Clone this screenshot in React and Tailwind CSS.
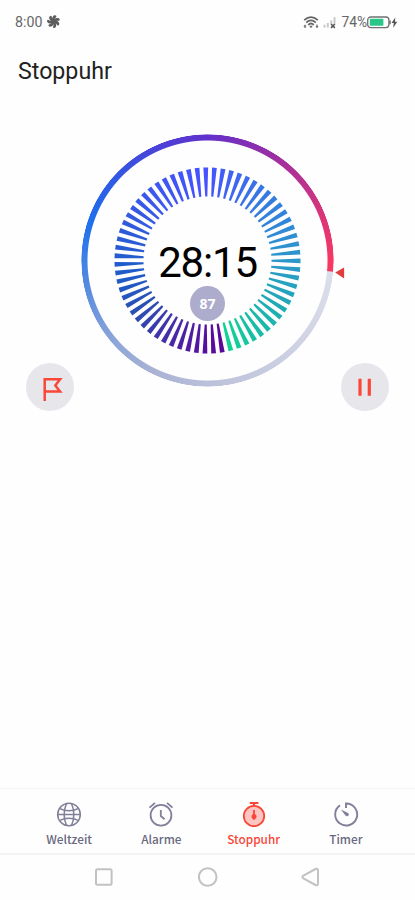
const CENTER = 130.5;
const TICK_COUNT = 67;

const tickStops = [
  [-1.5, '#4652ff'],
  [20, '#3f66ee'],
  [45, '#347ce0'],
  [90, '#2c97cb'],
  [120, '#21a9b6'],
  [145, '#18bda6'],
  [167.5, '#10d494'],
  [168.5, '#570896'],
  [182, '#5510a0'],
  [210, '#4430a8'],
  [235, '#2a50b4'],
  [260, '#1e5cc8'],
  [290, '#2e5bd8'],
  [320, '#3c58ee'],
  [358.9, '#4652ff'],
];

function tickColor(angle) {
  const i = Math.max(1, tickStops.findIndex(([a]) => a >= angle));
  const [a0, c0] = tickStops[i - 1];
  const [a1, c1] = tickStops[i];
  const t = (angle - a0) / (a1 - a0);
  const mix = [1, 3, 5].map((p) => {
    const from = parseInt(c0.slice(p, p + 2), 16);
    const to = parseInt(c1.slice(p, p + 2), 16);
    return Math.round(from + (to - from) * t);
  });
  return `rgb(${mix.join(',')})`;
}

function Dial() {
  const ticks = Array.from({ length: TICK_COUNT }, (_, i) => {
    const angle = -1.1 + (i * 360) / TICK_COUNT;
    return { angle, color: tickColor(angle) };
  });

  return (
    <div className="relative ml-[77px] h-[261px] w-[261px]">
      <div className="absolute inset-[4px] rounded-full bg-[conic-gradient(from_0deg,#6230cc_0deg,#a52f9c_38deg,#d8357a_68deg,#f93862_92deg,#f93862_94.9deg,#dcdfea_95.3deg,#d2d5e5_125deg,#bec3db_175deg,#a9b2d4_207deg,#8ba5d9_230deg,#5289e0_260deg,#1d70ee_288deg,#3a50df_320deg,#6230cc_360deg)] [mask:radial-gradient(circle,transparent_119.5px,black_120.5px,black_125.7px,transparent_126.5px)]" />
      <svg className="absolute inset-0" width="261" height="261" viewBox="0 0 261 261">
        {ticks.map(({ angle, color }) => (
          <path
            key={angle}
            d="M128.1 37.5h4.8l-1.35 29h-2.1z"
            fill={color}
            transform={`rotate(${angle} ${CENTER} ${CENTER})`}
          />
        ))}
      </svg>
      <div className="absolute inset-x-0 top-[108px] text-center font-[Roboto] text-[42px] leading-[50px] tracking-[-1.2px] text-black">
        28:15
      </div>
      <div className="absolute left-[113px] top-[156px] flex h-[35px] w-[35px] items-center justify-center rounded-full bg-[#adaccd] font-['Noto_Sans'] text-[14px] font-bold text-white">
        87
      </div>
      <svg className="absolute left-[258px] top-[137px]" width="10" height="12" viewBox="0 0 10 12">
        <path d="M.2 5.6 9.1.6v10.8z" fill="#e23d3e" />
      </svg>
    </div>
  );
}

function StatusBar() {
  return (
    <div className="flex h-[43px] items-center justify-between pl-[15px] pr-[17px] pt-[1px] text-[14.5px] text-[#666]">
      <div className="flex items-center gap-[5px]">
        <span className="pt-[1px] font-[Roboto] text-[14.2px]">8:00</span>
        <svg width="13" height="13" viewBox="0 0 13 13">
          {[0, 51, 103, 154, 206, 257, 309].map((a) => (
            <path key={a} d="M6.5 7C4.3 5 4.8 1.6 7.4.3 9.8.1 10 1.6 8.5 2.8 7.3 3.8 7.9 5.2 6.5 7z" fill="#5c5c5c" transform={`rotate(${a} 6.5 6.5)`} />
          ))}
        </svg>
      </div>
      <div className="flex items-center">
        <svg width="36" height="14" viewBox="0 0 36 14" fill="none" className="mr-[2px]">
          <path d="M1.2 5.2Q8 -.9 14.8 5.2M3.2 7.6Q8 3.2 12.8 7.6M5.2 9.8Q8 7.2 10.8 9.8" stroke="#666" strokeWidth="1.8" />
          <path d="m6.2 10.8 1.8 2.4 1.8-2.4zM.4 11.5 2 9.6l1.6 1.9zM1.4 11h1.2v2H1.4zM13.4 9.5h1.2v2h-1.2zM12.4 11.2h3.2L14 13.2z" fill="#666" />
          <path d="M20.5 9.8h2v2.7h-2zM23.8 8h2v4.5h-2zM27.2 5.5h2v3.3h-2zM30.5 2.3h2v6.5h-2z" fill="#c8c8c8" />
          <path d="m28 9 3.9 3.9m0-3.9L28 12.9" stroke="#555" strokeWidth="1.5" />
        </svg>
        <span className="pt-[1px] font-[Roboto] text-[13.8px]">74%</span>
        <svg width="31" height="13" viewBox="0 0 31 13" fill="none">
          <rect x=".7" y="1" width="21.2" height="10.6" rx="3" stroke="#707070" strokeWidth="1.3" />
          <rect x="2.8" y="2.8" width="13.6" height="7" rx=".8" fill="#2ac789" />
          <path d="M23 4.5v3.8" stroke="#707070" strokeWidth="1.6" />
          <path d="m28.3 1.5-3.8 5.6h2.3l-.6 4.7 4.1-6H28z" fill="#555" />
        </svg>
      </div>
    </div>
  );
}

function GlobeIcon() {
  return (
    <svg width="26" height="26" viewBox="0 0 26 26" fill="none" stroke="#817f99" strokeWidth="1.5">
      <circle cx="13" cy="13.5" r="11.3" />
      <path d="M10.5 2.5c-3 7-3 15 0 22M15.5 2.5c3 7 3 15 0 22M4 7.6c5 2.8 13 2.8 18 0M4 19.4c5-2.8 13-2.8 18 0M1.7 13.5h22.6" />
    </svg>
  );
}

function AlarmIcon() {
  return (
    <svg width="26" height="26" viewBox="0 0 26 26" fill="none" stroke="#817f99" strokeWidth="1.8">
      <circle cx="13" cy="14.3" r="10.4" />
      <path d="M1.5 6.6 7 1.9M24.5 6.6 19 1.9" />
      <path d="M12.8 9v6l3.8 3.2" />
    </svg>
  );
}

function StopwatchIcon() {
  return (
    <svg width="26" height="26" viewBox="0 0 26 26" fill="none" stroke="#f84638" strokeWidth="1.8">
      <circle cx="13" cy="15" r="10.2" fill="#fcc5c1" />
      <path d="M13 2v3M8.8 2h8.6" strokeWidth="2.2" />
      <path d="M13 9v9.8" strokeWidth="1.8" />
      <circle cx="13" cy="15.4" r="2.5" fill="#f84638" stroke="none" />
    </svg>
  );
}

function TimerIcon() {
  return (
    <svg width="26" height="26" viewBox="0 0 26 26" fill="none" stroke="#817f99" strokeWidth="1.9">
      <path d="M13 7V2.5a11 11 0 1 1-6 1.9" />
      <path d="m7.8 8.6 7.3 3.3c1.8 1.7-.4 4.2-2.4 2.9z" fill="#817f99" stroke="none" />
    </svg>
  );
}

const tabs = [
  { label: 'Weltzeit', Icon: GlobeIcon },
  { label: 'Alarme', Icon: AlarmIcon },
  { label: 'Stoppuhr', Icon: StopwatchIcon, active: true },
  { label: 'Timer', Icon: TimerIcon },
];

export default function App() {
  return (
    <div className="flex h-[900px] w-[415px] flex-col overflow-hidden bg-[#fefefe] font-['Liberation_Sans',sans-serif]">
      <StatusBar />
      <h1 className="pl-[18px] pt-[12px] font-[Roboto] text-[23.2px] leading-[32px] text-[#222]">Stoppuhr</h1>

      <main className="flex flex-1 flex-col pt-[43px]">
        <Dial />
        <div className="-mt-[28px] flex justify-between px-[26px]">
          <button aria-label="Runde" className="flex h-[48px] w-[48px] items-center justify-center rounded-full bg-[#e7e6eb]">
            <svg width="48" height="48" viewBox="0 0 48 48" fill="none" stroke="#f94739" strokeWidth="2.5">
              <path d="M18.7 38V16.2h15.4l-4.8 6.2 4.8 6.2H18.7" />
            </svg>
          </button>
          <button aria-label="Pause" className="flex h-[48px] w-[48px] items-center justify-center rounded-full bg-[#e7e6eb]">
            <svg width="48" height="48" viewBox="0 0 48 48" fill="#f94739">
              <path d="M17.4 15.8h3.2v17h-3.2zM26.7 15.8h3.2v17h-3.2z" />
            </svg>
          </button>
        </div>
      </main>

      <nav className="flex h-[65px] border-t border-[#f4f4f4] px-[23px] pt-[12px]">
        {tabs.map(({ label, Icon, active }) => (
          <div key={label} className="flex flex-1 flex-col items-center">
            <Icon />
            <span
              className={`mt-[3px] font-['Noto_Sans_CJK_SC',sans-serif] text-[11.8px] leading-[18px] font-medium ${
                active ? 'text-[#f84638]' : 'text-[#69687f]'
              }`}
            >
              {label}
            </span>
          </div>
        ))}
      </nav>

      <div className="flex h-[47px] items-center justify-between border-t-2 border-[#f3f3f3] px-[94px] pb-[2px]">
        <svg width="20" height="20" viewBox="0 0 20 20" fill="none" stroke="#c2c2c2" strokeWidth="2">
          <rect x="2" y="2.2" width="15.6" height="15.6" rx="1.5" />
        </svg>
        <svg width="20" height="20" viewBox="0 0 20 20" fill="none" stroke="#c2c2c2" strokeWidth="2">
          <circle cx="9.7" cy="10" r="8.8" />
        </svg>
        <svg width="20" height="20" viewBox="0 0 20 20" fill="none" stroke="#c2c2c2" strokeWidth="2" strokeLinejoin="round">
          <path d="M2.4 8.6Q.4 10 2.4 11.4L14.5 18Q17 18.8 17 16.5v-13Q17 1.2 14.5 2z" />
        </svg>
      </div>
    </div>
  );
}
